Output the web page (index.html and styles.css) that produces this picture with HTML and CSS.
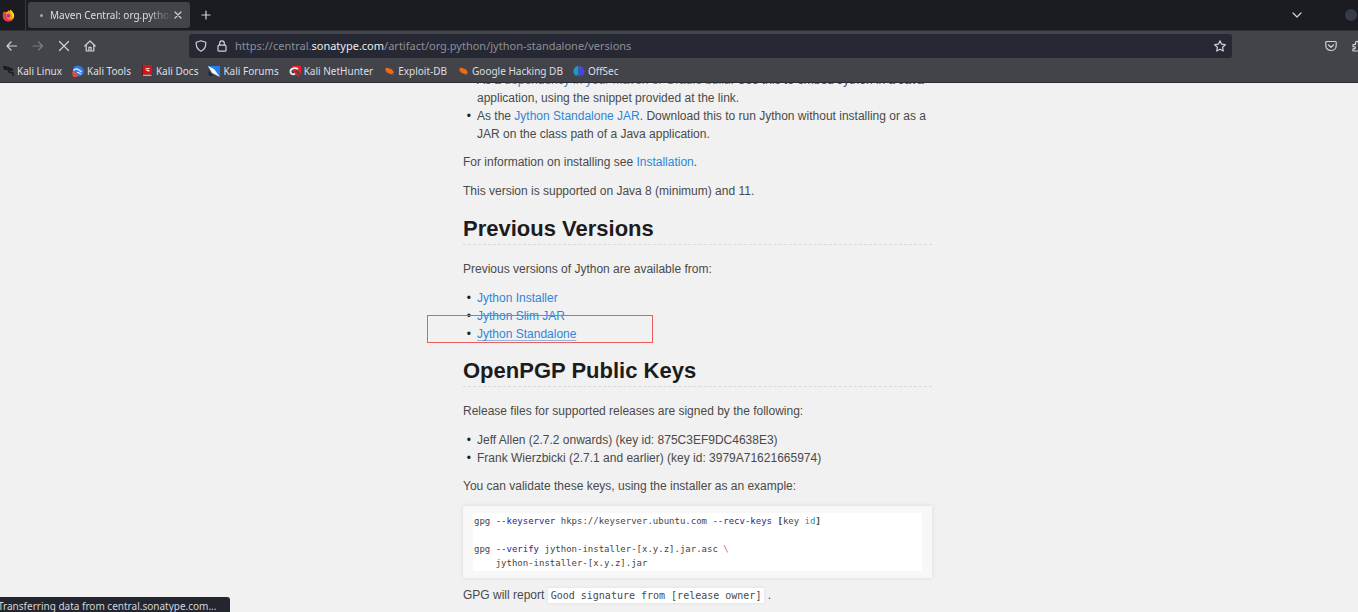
FILE: index.html
```html
<!DOCTYPE html>
<html lang="en">
<head>
<meta charset="utf-8">
<title>Maven Central: org.python</title>
<link rel="stylesheet" href="styles.css">
</head>
<body>
<div class="browser">
  <header class="chrome">
    <div class="tabbar">
      <div class="pinned">
        <svg class="fox" viewBox="0 0 16 16" aria-hidden="true">
          <path fill="#ff9a16" d="M8 1.500c1.300.5 2 1.200 2.400 2.100C9.800 2.300 10 1.500 10.500.8c.8 1.600 3.700 3 4.400 6.400.8 4.300-2.400 8-6.700 8-4.100 0-7.200-3-7.200-7 0-2.300.8-4.200 2-5.300l.5 1.600C5 3.800 6.600 4 8 1.500z"/>
          <path fill="#f4364d" d="M1.300 6C.5 10 2 15.300 8.200 15.300c3 0 5.300-1.600 6.300-4-2 1.900-5.100 2.100-7.200.8C5.100 10.700 4.500 8 5.200 6.300L3.500 4.500 3 3z"/>
          <circle fill="#8a3fc4" cx="7.800" cy="8.300" r="2.500"/>
          <path fill="#ffdf3c" d="M10.500.8c2 2 3.600 4 4.200 6.400.2 2-.6 3.500-1.600 4.300.4-3-1.300-6.100-2.700-7.800-.6-1-.5-2.100.1-2.900z"/>
        </svg>
      </div>
      <div class="tab">
        <span class="tab-dot"></span>
        <span class="tab-title">Maven Central: org.python</span>
        <button class="tab-close" aria-label="Close tab"><svg viewBox="0 0 8 8"><path d="M1 1l6 6M7 1L1 7"/></svg></button>
      </div>
      <button class="icon-button new-tab" aria-label="New tab"><svg viewBox="0 0 10 10"><path d="M5 1v8M1 5h8"/></svg></button>
      <button class="icon-button tab-list" aria-label="List all tabs"><svg viewBox="0 0 12 12"><path d="M2 4l4 4 4-4"/></svg></button>
      <span class="window-dot"></span>
    </div>
    <nav class="toolbar" aria-label="Navigation">
      <div class="nav-buttons">
        <button class="icon-button" aria-label="Back"><svg viewBox="0 0 12 12"><path d="M10.500 6H1M5 2L1 6l4 4"/></svg></button>
        <button class="icon-button faded" aria-label="Forward"><svg viewBox="0 0 12 12"><path d="M1 6h9.500M6.500 2l4 4-4 4"/></svg></button>
        <button class="icon-button" aria-label="Stop"><svg viewBox="0 0 12 12"><path d="M1.500 1.500l9 9M10.500 1.500l-9 9"/></svg></button>
        <button class="icon-button" aria-label="Home"><svg viewBox="0 0 12 12"><path d="M.8 6L6 1l5.200 5M2.200 5v6h7.600V5M4.900 11V7.400h2.200V11"/></svg></button>
      </div>
      <div class="address">
        <svg class="glyph" viewBox="0 0 12 12"><path d="M6 .8l4.800 1.500c.3 4-1.200 7.400-4.800 9-3.600-1.600-5.100-5-4.800-9z"/></svg>
        <svg class="glyph lock" viewBox="0 0 12 12"><rect x="2" y="5.200" width="8" height="6" rx="1"/><path d="M3.700 5V3.200c0-3.200 4.600-3.200 4.600 0V5"/></svg>
        <a class="url" href="#">https://central.<span class="host">sonatype.com</span>/artifact/org.python/jython-standalone/versions</a>
        <button class="icon-button star" aria-label="Bookmark this page"><svg viewBox="0 0 12 12"><path d="M6 .8l1.600 3.400 3.700.5-2.700 2.600.7 3.700L6 9.200 2.700 11l.7-3.700L.7 4.700l3.700-.5z"/></svg></button>
      </div>
      <div class="extras">
        <button class="icon-button" aria-label="Pocket"><svg viewBox="0 0 12 12"><path d="M1.700 1.500h8.600q.9 0 .9.900v3c0 6.800-10.400 6.800-10.400 0v-3q0-.9.900-.9zM3.500 5L6 7.300 8.500 5"/></svg></button>
        <button class="icon-button" aria-label="Extensions"><svg viewBox="0 0 12 12"><path d="M1 4.500h2.600C2.600.2 7.400.2 6.400 4.500H10V11H1V8.800c3.200.6 3.200-2.800 0-2.200z"/></svg></button>
      </div>
    </nav>
    <nav class="bookmarks" aria-label="Bookmarks">
      <a href="#"><svg viewBox="0 0 12 12"><path fill="none" stroke="#17191d" stroke-width="1.400" d="M1 1.500l5 1 5 2.500-4.500-.5.500 2.500 3.500.7 1 3M2 4l4 .5M1.500 2.500L5 3"/></svg>Kali Linux</a>
      <a href="#"><svg viewBox="0 0 12 12"><path fill="#2f7bee" d="M1 4c1-5 10-4 11 2 .3 4-4 6-8 5C1 9 .5 6 1 4z"/><path fill="#e84a43" d="M0 6.500l4.500 1L5 12H1z"/><path fill="none" stroke="#e9f1ff" stroke-width="1.300" d="M1.500 5.500c3-3 5-1 8 1.500M5 7l4 2"/></svg>Kali Tools</a>
      <a href="#"><svg viewBox="0 0 12 12"><path fill="#db1118" d="M2 0h9v9H2z"/><path fill="#7a0d11" d="M1 1l1-1v9h9v2H1z"/><path fill="none" stroke="#fff" stroke-width="1.200" d="M4.500 4l4-.5M5.500 5.500l3 .3"/><path stroke="#eee" d="M2 10.200h8.500"/></svg>Kali Docs</a>
      <a href="#"><svg viewBox="0 0 12 12"><path fill="#237cf0" d="M0 1h12v10h-2L0 2z"/><path fill="#f3f4f7" d="M0 1l6 3 6 8-8-4z"/><path fill="#1a2740" d="M0 6l6 5H1z"/></svg>Kali Forums</a>
      <a href="#"><svg viewBox="0 0 12 12"><path fill="#e3262d" d="M3 1h9v9L9 6 5 4z"/><path fill="none" stroke="#f5efef" stroke-width="1.800" d="M9 4C5 2 1 4 1.500 7c.5 2.500 3 3 4.500 1.500"/><path fill="none" stroke="#e3262d" stroke-width="1.600" d="M7 5c-3 0-2 2 0 3l3 3"/></svg>Kali NetHunter</a>
      <a href="#"><svg viewBox="0 0 12 12"><path fill="#f06a16" d="M2 4l2-1.500 5 2 2 3L8.500 9.500 4 7.500z"/><path stroke="#b9480a" d="M2 6l2 1M9 9l2 .5"/></svg>Exploit-DB</a>
      <a href="#"><svg viewBox="0 0 12 12"><path fill="#f06a16" d="M2 4l2-1.500 5 2 2 3L8.500 9.500 4 7.500z"/><path stroke="#b9480a" d="M2 6l2 1M9 9l2 .5"/></svg>Google Hacking DB</a>
      <a href="#"><svg viewBox="0 0 12 12"><path fill="#1c9bc8" d="M5 .8v8.700L3 11C-.8 8.500-.5 2.500 5 .8z"/><path fill="#4b45d8" d="M7 .8c5.500 1.700 5.800 7.700 2 10.200L7 9.500z"/><path fill="#2f74d6" d="M5.400 1h1.200v10.500H5.400z"/></svg>OffSec</a>
    </nav>
  </header>
  <main class="page">
    <article class="content">
      <ul>
        <li>As a <a href="#">dependency in your Maven or Gradle build</a>. Use this to embed Jython in a Java application, using the snippet provided at the link.</li>
        <li>As the <a href="#">Jython Standalone JAR</a>. Download this to run Jython without installing or as a JAR on the class path of a Java application.</li>
      </ul>
      <p>For information on installing see <a href="#">Installation</a>.</p>
      <p>This version is supported on Java 8 (minimum) and 11.</p>
      <h2>Previous Versions</h2>
      <p>Previous versions of Jython are available from:</p>
      <ul>
        <li><a href="#">Jython Installer</a></li>
        <li><a href="#">Jython Slim JAR</a></li>
        <li class="marked"><a class="hovered" href="#">Jython Standalone</a></li>
      </ul>
      <h2>OpenPGP Public Keys</h2>
      <p>Release files for supported releases are signed by the following:</p>
      <ul>
        <li>Jeff Allen (2.7.2 onwards) (key id: 875C3EF9DC4638E3)</li>
        <li>Frank Wierzbicki (2.7.1 and earlier) (key id: 3979A71621665974)</li>
      </ul>
      <p>You can validate these keys, using the installer as an example:</p>
      <div class="snippet"><pre>gpg <span class="flag">--keyserver</span> hkps://keyserver.ubuntu.com <span class="flag">--recv-keys</span> <b>[</b>key <span class="builtin">id</span><b>]</b>

gpg <span class="flag">--verify</span> jython-installer-[x.y.z].jar.asc <span class="escape">\</span>
    jython-installer-[x.y.z].jar</pre></div>
      <p>GPG will report <code>Good signature from [release owner]</code> .</p>
    </article>
  </main>
  <div class="status" role="status"><span>Transferring data from central.sonatype.com...</span></div>
</div>
</body>
</html>
```

FILE: styles.css
```css
*, *::before, *::after { box-sizing: border-box; }
body { margin: 0; background: #f1f1f1; }
button { padding: 0; border: 0; background: none; color: inherit; }
a { text-decoration: none; }

.browser {
  position: relative;
  display: flex;
  flex-direction: column;
  height: 100vh;
  overflow: hidden;
}

.chrome {
  flex: none;
  overflow: hidden;
  background: #42444a;
  border-bottom: 1px solid #2b2c31;
  color: #dfdfe3;
  font: 10px/16px "Noto Sans", "Open Sans", sans-serif;
}
.chrome svg { display: block; flex: none; }
.icon-button { display: grid; place-items: center; }
.icon-button svg { width: 12px; height: 12px; }
.icon-button svg, .glyph, .tab-close svg {
  fill: none;
  stroke: #d2d2d6;
  stroke-width: 1.2;
  stroke-linecap: round;
  stroke-linejoin: round;
}
.faded { opacity: 0.4; }

.tabbar {
  display: flex;
  align-items: center;
  height: 31px;
  background: #1b1c22;
  border-bottom: 1px solid #303137;
}
.pinned {
  display: flex;
  align-items: center;
  width: 26px;
  height: 30px;
  padding-left: 2px;
  border-right: 1px solid #3a3b41;
}
.fox { width: 13px; height: 13px; }
.tab {
  display: flex;
  align-items: center;
  width: 162px;
  height: 26px;
  margin-left: 2px;
  padding: 0 8px 0 12px;
  border-radius: 3px;
  background: #42444a;
}
.tab-dot {
  flex: none;
  width: 3px;
  height: 3px;
  margin-right: 7px;
  border-radius: 50%;
  background: #a5a6aa;
}
.tab-title {
  flex: 1;
  overflow: hidden;
  white-space: nowrap;
  mask-image: linear-gradient(to right, #000 80%, transparent);
}
.tab-close { width: 8px; margin-left: 2px; }
.tab-close svg { width: 8px; height: 8px; }
.new-tab { margin-left: 11px; }
.new-tab svg { width: 10px; height: 10px; }
.tab-list { margin-left: auto; }
.window-dot {
  flex: none;
  width: 12px;
  height: 12px;
  margin: 0 1px 0 42px;
  border-radius: 50%;
  background: #353b49;
}

.toolbar { display: flex; align-items: center; height: 30px; }
.nav-buttons {
  display: flex;
  flex: none;
  gap: 14px;
  width: 189px;
  padding-left: 6px;
}
.address {
  display: flex;
  align-items: center;
  flex: 1;
  height: 24px;
  padding: 0 6px;
  border-radius: 3px;
  background: #262834;
}
.glyph { width: 12px; height: 12px; }
.lock { margin: 0 7px 0 9px; }
.url {
  flex: 1;
  overflow: hidden;
  color: #8d8f97;
  font-size: 11px;
  white-space: nowrap;
}
.host { color: #ededf0; }
.extras {
  display: flex;
  flex: none;
  gap: 15px;
  width: 126px;
  padding-left: 93px;
  overflow: hidden;
}

.bookmarks { display: flex; gap: 10px; height: 21px; padding: 2px 2px 0; }
.bookmarks a {
  display: flex;
  align-items: center;
  gap: 3px;
  height: 16px;
  color: inherit;
  white-space: nowrap;
}
.bookmarks svg { width: 12px; height: 12px; }

.page {
  display: flex;
  flex: 1;
  flex-direction: column;
  min-height: 0;
  padding: 0 426px 0 463px;
  overflow: hidden;
  color: #4a4a4a;
  font: 12px/18px "Liberation Sans", Arial, sans-serif;
}
/* The document is scrolled part of a line past its list. */
.content { margin-top: -12px; }
.content p { margin: 0 0 11px; }
.content ul { margin: 0 0 10px; padding-left: 14px; }
.content li::marker { content: "•\2002"; color: #222; }
.content a { color: #2f86d8; }
.content h2 {
  margin: 0 0 15px;
  padding-top: 2px;
  border-bottom: 1px dashed #d9d9d9;
  color: #1c1c1c;
  font-size: 22px;
  line-height: 31px;
}
.marked { position: relative; }
.marked::after {
  content: "";
  position: absolute;
  top: -10px;
  left: -50px;
  width: 226px;
  height: 28px;
  border: 1px solid #ea5d5d;
  pointer-events: none;
}
.content .hovered {
  text-decoration: underline #8fb9df;
  text-underline-offset: 2px;
}

.snippet {
  margin-bottom: 8px;
  padding: 7px 10px;
  background: #f8f8f8;
  box-shadow: 0 0 4px #d9d9d9;
}
.snippet pre {
  margin: 0;
  padding: 1px;
  background: #fff;
  color: #444;
  font: 9px/14px "DejaVu Sans Mono", monospace;
}
.flag { color: #23239a; }
.builtin { color: #2690c0; }
.escape { color: #e35a6a; }
.content code {
  padding: 2px 3px;
  background: #fff;
  box-shadow: 0 0 3px #ddd;
  font: 10px/14px "DejaVu Sans Mono", monospace;
}

.status {
  position: absolute;
  bottom: 0;
  left: 0;
  height: 15px;
  padding-right: 14px;
  overflow: hidden;
  border-radius: 0 3px 0 0;
  background: #23252f;
  color: #d5d5da;
  font: 10px/18px "Noto Sans", "Open Sans", sans-serif;
  white-space: nowrap;
}
.status span { margin-left: -2px; }
```
